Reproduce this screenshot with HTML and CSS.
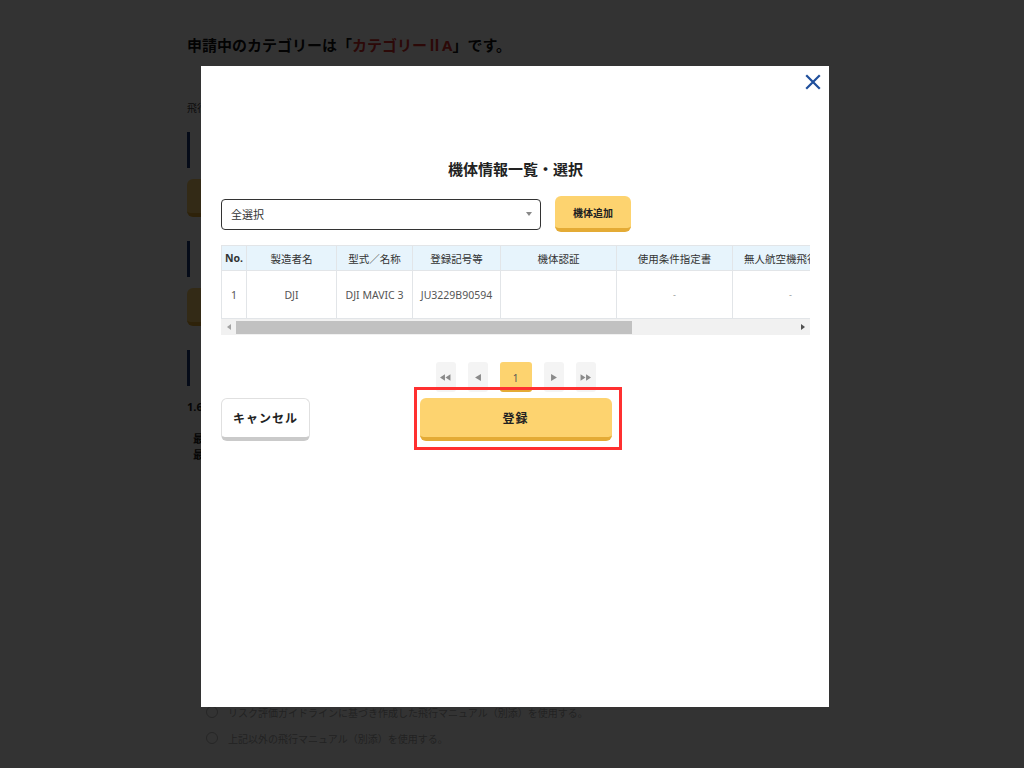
FILE: index.html
```html
<!DOCTYPE html>
<html lang="ja">
  <head>
    <meta charset="UTF-8" />
    <meta name="viewport" content="width=device-width, initial-scale=1.0" />
    <title>機体情報一覧・選択</title>
    <link rel="stylesheet" href="styles.css">
  </head>
  <body>
    <div class="page">
      <h1 class="page-title">申請中のカテゴリーは「<span class="category">カテゴリーⅡA</span>」です。</h1>
      <p class="lead">飛行</p>

      <div class="sec-head"></div>
      <div class="sec-btn"></div>

      <div class="sec-head"></div>
      <div class="sec-btn"></div>

      <div class="sec-head"></div>
      <div class="manual">
        <p class="manual-no">1.6</p>
        <p class="manual-sub">（</p>
        <p class="manual-item">最</p>
        <p class="manual-item">最</p>
      </div>

      <ul class="radio-list">
        <li><span class="radio"></span>リスク評価ガイドラインに基づき作成した飛行マニュアル（別添）を使用する。</li>
        <li><span class="radio"></span>上記以外の飛行マニュアル（別添）を使用する。</li>
      </ul>
    </div>

    <div class="overlay">
      <div class="modal">
        <button class="modal-close" type="button">
          <svg viewBox="0 0 20 20" width="20" height="20">
            <path d="M4 4L16 16M16 4L4 16" stroke="#1f4f9c" stroke-width="2.2" stroke-linecap="square" fill="none" />
          </svg>
        </button>

        <h2 class="modal-title">機体情報一覧・選択</h2>

        <div class="toolbar">
          <div class="select-box">
            <span>全選択</span>
            <span class="select-arrow"></span>
          </div>
          <button class="btn btn-yellow btn-add" type="button">機体追加</button>
        </div>

        <div class="table-scroll">
          <table class="drone-table">
            <colgroup>
              <col style="width: 25px" />
              <col style="width: 90px" />
              <col style="width: 76px" />
              <col style="width: 88px" />
              <col style="width: 116px" />
              <col style="width: 116px" />
              <col style="width: 319px" />
            </colgroup>
            <thead>
              <tr>
                <th class="col-no">No.</th>
                <th>製造者名</th>
                <th>型式／名称</th>
                <th>登録記号等</th>
                <th>機体認証</th>
                <th>使用条件指定書</th>
                <th class="col-log">無人航空機飛行日誌</th>
              </tr>
            </thead>
            <tbody>
              <tr>
                <td>1</td>
                <td>DJI</td>
                <td>DJI MAVIC 3</td>
                <td>JU3229B90594</td>
                <td></td>
                <td class="dash">-</td>
                <td class="dash col-log">-</td>
              </tr>
            </tbody>
          </table>
        </div>
        <div class="scrollbar">
          <span class="sb-arrow sb-left"></span>
          <span class="sb-thumb"></span>
          <span class="sb-track"></span>
          <span class="sb-arrow sb-right"></span>
        </div>

        <div class="pager">
          <span class="page-btn">
            <svg viewBox="0 0 10 6" width="11" height="7"><path d="M0 3L4.5 0V6Z M5 3L9.5 0V6Z" fill="#8a8a8a" /></svg>
          </span>
          <span class="page-btn">
            <svg viewBox="0 0 5 6" width="6" height="7"><path d="M0 3L5 0V6Z" fill="#8a8a8a" /></svg>
          </span>
          <span class="page-btn current">1</span>
          <span class="page-btn">
            <svg viewBox="0 0 5 6" width="6" height="7"><path d="M5 3L0 0V6Z" fill="#8a8a8a" /></svg>
          </span>
          <span class="page-btn">
            <svg viewBox="0 0 10 6" width="11" height="7"><path d="M5 3L0.5 0V6Z M10 3L5.5 0V6Z" fill="#8a8a8a" /></svg>
          </span>
        </div>

        <div class="actions">
          <button class="btn btn-cancel" type="button">キャンセル</button>
          <div class="submit-wrap">
            <button class="btn btn-yellow btn-submit" type="button">登録</button>
            <span class="highlight"></span>
          </div>
        </div>
      </div>
    </div>
  </body>
</html>
```

FILE: styles.css
```css
* {
  box-sizing: border-box;
}

body {
  margin: 0;
  height: 100vh;
  overflow: hidden;
  background: #fff;
  color: #222;
  font-family: "Noto Sans", "Noto Sans CJK JP", sans-serif;
}

/* page behind the modal */

.page {
  width: 650px;
  margin: 0 auto;
  padding-top: 34px;
}

.page-title {
  margin: 0;
  font-size: 15px;
  line-height: 22px;
  font-weight: bold;
  color: #111;
}

.page-title .category {
  color: #d9302a;
}

.lead {
  margin: 44px 0 0;
  font-size: 10px;
  line-height: 16px;
  color: #444;
}

.sec-head {
  margin-top: 24px;
  height: 36px;
  border-left: 3px solid #1d3b7a;
}

.lead + .sec-head {
  margin-top: 16px;
}

.sec-btn {
  margin-top: 11px;
  width: 240px;
  height: 38px;
  border-radius: 6px;
  background: #fdd36f;
  border-bottom: 4px solid #e4ab35;
}

.manual {
  margin-top: 13px;
}

.manual p {
  margin: 0;
  font-size: 11px;
  line-height: 16px;
}

.manual-no {
  font-weight: bold;
}

.manual-sub {
  padding-left: 12px;
  color: #555;
}

.manual-item {
  padding-left: 6px;
  font-weight: bold;
}

.radio-list {
  list-style: none;
  margin: 236px 0 0;
  padding: 0 0 0 19px;
}

.radio-list li {
  display: flex;
  align-items: center;
  gap: 10px;
  height: 26px;
  font-size: 10px;
  color: #aaa;
}

.radio {
  width: 12px;
  height: 12px;
  border: 1px solid #bbb;
  border-radius: 50%;
  background: #fff;
}

/* modal */

.overlay {
  position: fixed;
  inset: 0;
  background: rgba(0, 0, 0, 0.8);
}

.modal {
  position: absolute;
  left: 201px;
  top: 66px;
  width: 628px;
  height: 641px;
  padding: 0 19px 0 20px;
  background: #fff;
}

.modal-close {
  position: absolute;
  top: 6px;
  right: 6px;
  width: 20px;
  height: 20px;
  padding: 0;
  border: none;
  background: none;
  display: flex;
  cursor: pointer;
}

.modal-title {
  margin: 92px 0 16px;
  font-size: 15px;
  line-height: 22px;
  font-weight: bold;
  text-align: center;
  color: #222;
}

.toolbar {
  display: flex;
  align-items: center;
  gap: 14px;
  height: 36px;
  margin-bottom: 13px;
}

.select-box {
  width: 320px;
  height: 31px;
  padding: 0 8px 0 9px;
  border: 1.5px solid #333;
  border-radius: 4px;
  display: flex;
  align-items: center;
  justify-content: space-between;
  font-size: 11px;
  color: #333;
}

.select-arrow {
  width: 0;
  height: 0;
  border-left: 3px solid transparent;
  border-right: 3px solid transparent;
  border-top: 4px solid #888;
}

.btn {
  font-family: "Noto Sans", "Noto Sans CJK JP", sans-serif;
  font-weight: bold;
  color: #222;
  border: none;
  border-radius: 6px;
  cursor: pointer;
  padding: 0;
}

.btn-yellow {
  background: #fdd36f;
  border-bottom: 4px solid #e4ab35;
}

.btn-add {
  width: 76px;
  height: 36px;
  font-size: 10px;
}

/* table */

.table-scroll {
  width: 589px;
  overflow: hidden;
}

.drone-table {
  width: 830px;
  table-layout: fixed;
  border-collapse: collapse;
  font-size: 10.5px;
}

.drone-table th,
.drone-table td {
  border: 1px solid #e2e5e8;
  text-align: center;
  white-space: nowrap;
  overflow: hidden;
  padding: 0 2px;
}

.drone-table .col-log {
  text-align: left;
  padding-left: 11px;
}

.drone-table td.dash.col-log {
  padding-left: 56px;
}

.drone-table th {
  height: 25px;
  background: #e7f4fc;
  font-weight: normal;
  color: #333;
}

.drone-table th.col-no {
  font-weight: bold;
}

.drone-table td {
  height: 48px;
  color: #555;
}

.drone-table td.dash {
  color: #999;
  font-size: 9px;
}

.scrollbar {
  width: 589px;
  height: 16px;
  display: flex;
  align-items: center;
  background: #f1f1f1;
}

.sb-arrow {
  width: 15px;
  height: 16px;
  display: flex;
  align-items: center;
  justify-content: center;
}

.sb-arrow::before {
  content: "";
  border-top: 3px solid transparent;
  border-bottom: 3px solid transparent;
}

.sb-left::before {
  border-right: 4px solid #a3a3a3;
}

.sb-right::before {
  border-left: 4px solid #505050;
}

.sb-thumb {
  width: 396px;
  height: 13px;
  background: #c1c1c1;
}

.sb-track {
  flex: 1;
}

/* pagination */

.pager {
  margin-top: 27px;
  display: flex;
  justify-content: center;
  gap: 12px;
}

.page-btn {
  width: 20px;
  height: 30px;
  border-radius: 3px;
  background: #f4f4f4;
  display: flex;
  align-items: center;
  justify-content: center;
  font-size: 10px;
  color: #555;
}

.page-btn.current {
  width: 32px;
  background: #fdd36f;
  border-bottom: 2px solid #e4ab35;
  padding-top: 4px;
}

/* bottom buttons */

.actions {
  margin-top: 6px;
  display: grid;
  grid-template-columns: 1fr 192px 1fr;
  align-items: end;
}

.btn-cancel {
  justify-self: start;
  width: 89px;
  height: 43px;
  background: #fff;
  border: 1px solid #e0e0e0;
  border-bottom: 4px solid #cacaca;
  font-size: 12px;
  letter-spacing: 1px;
}

.submit-wrap {
  position: relative;
  display: flex;
}

.btn-submit {
  width: 192px;
  height: 43px;
  font-size: 12px;
  letter-spacing: 1px;
}

.highlight {
  position: absolute;
  top: -11px;
  bottom: -9px;
  left: -6px;
  right: -10px;
  border: 3px solid #ff3030;
  pointer-events: none;
}
```
